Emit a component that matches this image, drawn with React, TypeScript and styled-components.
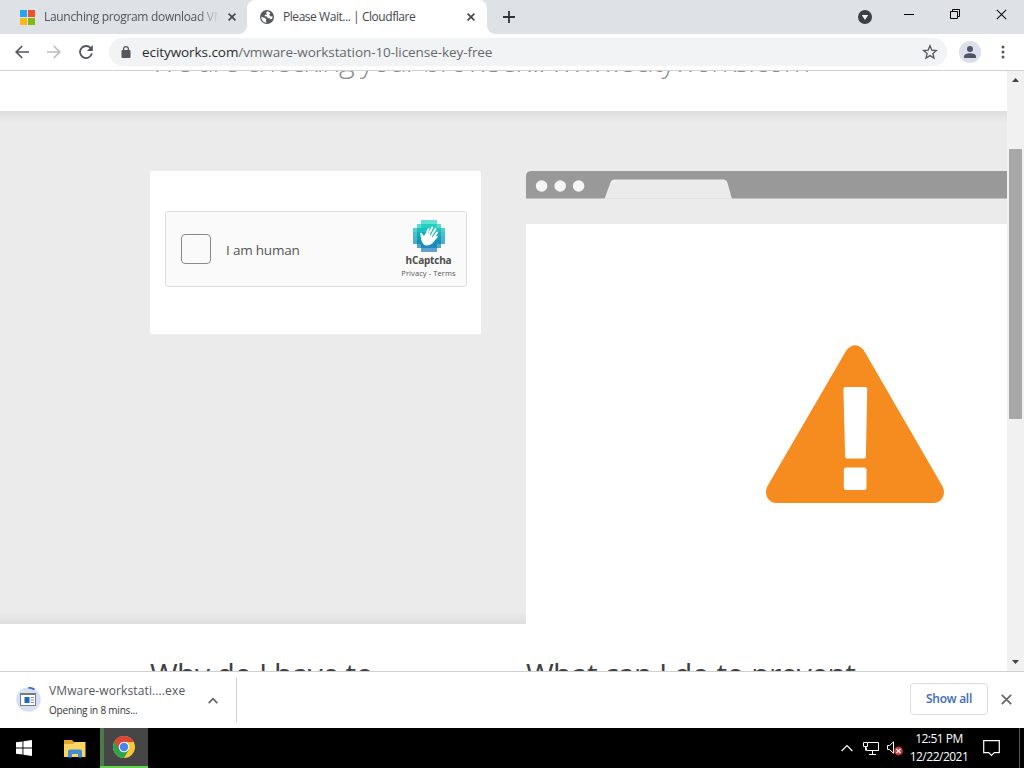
import styled, { createGlobalStyle } from "styled-components";

const GlobalStyle = createGlobalStyle`
  * {
    box-sizing: border-box;
  }
  body {
    margin: 0;
    overflow: hidden;
    font-family: "Open Sans", "Noto Sans", sans-serif;
  }
`;

const captchaRows = [
  [2, 5],
  [1, 6],
  [0, 7],
  [0, 7],
  [0, 7],
  [0, 7],
  [1, 6],
  [2, 5],
];

const captchaColors = [
  "#2fd8c4",
  "#25cfc2",
  "#1cc0bf",
  "#12aebb",
  "#109fb8",
  "#1592ba",
  "#2088bd",
  "#2b83c0",
];

const CaptchaLogo = () => (
  <svg width="32" height="32" viewBox="0 0 32 32">
    {captchaRows.map(([start, end], row) =>
      Array.from({ length: end - start + 1 }, (_, i) => {
        const col = start + i;
        const edge = Math.min(col, 7 - col, row, 7 - row);
        const corner =
          edge === 0 || (edge === 1 && (row < 2 || row > 5) && (i === 0 || i === end - start));
        return (
          <rect
            key={`${row}-${col}`}
            x={col * 4}
            y={row * 4}
            width="4"
            height="4"
            fill={captchaColors[row]}
            opacity={corner ? 0.75 : 1}
            shapeRendering="crispEdges"
          />
        );
      })
    )}
    <g stroke="#fff" strokeLinecap="round" strokeLinejoin="round" fill="#fff">
      <path
        d="M8 13.5 10.6 17 14 14.2 21 19.4C19.8 22.4 17.6 24.2 15 24.6 11.6 25 9.6 22.5 9 19.5z"
        strokeWidth="1.5"
      />
      <path
        d="M12.6 16 15.5 9.2M14.8 16.2 19.2 7.6M17 17.8 22.5 9M19 19.6 24 12.6M19.8 21 23.8 16.8"
        strokeWidth="2"
      />
    </g>
  </svg>
);

const WarningSign = () => (
  <svg width="178" height="158" viewBox="0 0 178 158">
    <path
      d="M80.4 5.2Q89.2-4.8 97.8 5.2L176 140.5C181.3 149.5 175 158 168 158H10C2.6 158-3.1 149.5 1.8 140.5z"
      fill="#f68b1f"
    />
    <path
      d="M79.4 42h19.8q2 0 2 2l-1.3 67.5q0 2-2 2H81.1q-2 0-2-2L77.4 44q0-2 2-2z"
      fill="#fff"
    />
    <rect x="77.8" y="122.5" width="22.7" height="22.4" rx="2.5" fill="#fff" />
  </svg>
);

const BrowserBar = () => (
  <svg width="481" height="28" viewBox="0 0 481 28">
    <path d="M0 27.5V5Q0 0 6 0H481V27.5z" fill="#999" />
    <path d="M78.5 28 84.6 11Q85.5 8.4 88 8.4H197.8Q200.3 8.4 201.2 11L206 28z" fill="#ebebeb" />
    <path d="M78.5 27.5H206" stroke="#e2e2e2" strokeWidth="1" />
    <circle cx="15.6" cy="15" r="5.8" fill="#f5f5f5" />
    <circle cx="34.2" cy="15" r="5.8" fill="#f5f5f5" />
    <circle cx="52.6" cy="15" r="5.8" fill="#f5f5f5" />
  </svg>
);

const CloseIcon = ({ size = 8, color = "#45484c", width = 1.7 }) => (
  <svg width={size} height={size} viewBox="0 0 8 8">
    <path d="M.6.6 7.4 7.4M7.4.6.6 7.4" stroke={color} strokeWidth={width} />
  </svg>
);

const App = () => {
  return (
    <Screen>
      <GlobalStyle />
      <TabStrip>
        <Tab>
          <svg width="15" height="15" viewBox="0 0 15 15">
            <path d="M0 0h7v7H0z" fill="#25a3ec" />
            <path d="M8 0h7v7H8z" fill="#f0512a" />
            <path d="M0 8h7v7H0z" fill="#fdb813" />
            <path d="M8 8h7v7H8z" fill="#7fba17" />
          </svg>
          <TabTitle $width={175} $spacing={-0.31} $faded>
            Launching program download VMware
          </TabTitle>
          <TabClose>
            <CloseIcon />
          </TabClose>
        </Tab>
        <Tab $active>
          <svg width="14" height="14" viewBox="0 0 14 14">
            <circle cx="7" cy="7" r="7" fill="#55585d" />
            <path
              d="M7.3 1.3 6 2.9 7.2 4.7H5.1L4.5 6.2 6.8 6.5 8.1 8.2H9.9L10.6 9.5 12.3 8.6 12.7 6.6 10.5 6.2 9.1 4.8 10.3 3.4 9.1 1.7zM1.3 6.7 5 8.1 6.5 9.4 5.8 10.5 6.6 12.7C3.6 12.6 1.2 10 1.3 6.7z"
              fill="#fff"
            />
          </svg>
          <TabTitle $width={178} $spacing={-0.45}>
            Please Wait... | Cloudflare
          </TabTitle>
          <TabClose>
            <CloseIcon />
          </TabClose>
        </Tab>
        <NewTab>
          <svg width="12" height="12" viewBox="0 0 12 12">
            <path d="M6 0v12M0 6h12" stroke="#303338" strokeWidth="1.8" />
          </svg>
        </NewTab>
        <WindowControls>
          <svg width="14" height="14" viewBox="0 0 14 14">
            <circle cx="7" cy="7" r="7" fill="#3c4043" />
            <path d="M3.8 5h6.4L7 10z" fill="#f1f3f4" />
          </svg>
          <svg width="10" height="10" viewBox="0 0 10 10">
            <path d="M0 5.5h10" stroke="#000" />
          </svg>
          <svg width="10" height="10" viewBox="0 0 10 10">
            <path d="M.5 2.5h7v7h-7zM2.5 2.5v-2h7v7h-2" fill="none" stroke="#000" />
          </svg>
          <CloseIcon size={11} color="#111" width={0.8} />
        </WindowControls>
      </TabStrip>

      <Toolbar>
        <NavIcons>
          <svg width="14" height="14" viewBox="0 0 14 14">
            <path d="M14 7H1.5M7.2 1 1.2 7l6 6" fill="none" stroke="#505358" strokeWidth="1.7" />
          </svg>
          <svg width="14" height="14" viewBox="0 0 14 14">
            <path d="M0 7h12.5M6.8 1l6 6-6 6" fill="none" stroke="#babcbe" strokeWidth="1.7" />
          </svg>
          <svg width="14" height="14" viewBox="0 0 14 14">
            <path d="M12 3.6A6 6 0 1 0 12.9 8.4" fill="none" stroke="#505358" strokeWidth="1.8" />
            <path d="M13.8 0v6H7.9z" fill="#505358" />
          </svg>
        </NavIcons>
        <AddressBar>
          <svg width="10" height="12" viewBox="0 0 10 12">
            <rect x=".5" y="4" width="9" height="8" rx="1" fill="#55585d" />
            <path d="M2.6 5V3a2.4 2.4 0 0 1 4.8 0v2" fill="none" stroke="#55585d" strokeWidth="1.3" />
          </svg>
          <Url>
            ecityworks.com<span>/vmware-workstation-10-license-key-free</span>
          </Url>
          <svg width="16" height="16" viewBox="0 0 16 16">
            <path
              d="m8 1.8 1.8 4.3 4.6.4-3.5 3 1.1 4.6L8 11.6l-4 2.5 1.1-4.6-3.5-3 4.6-.4z"
              fill="none"
              stroke="#55585d"
              strokeWidth="1.3"
            />
          </svg>
        </AddressBar>
        <Avatar>
          <svg width="12" height="12" viewBox="0 0 12 12">
            <circle cx="6" cy="3" r="3" fill="#4d5566" />
            <path d="M0 12v-1.5C0 8.3 3 7.3 6 7.3s6 1 6 3.2V12z" fill="#4d5566" />
          </svg>
        </Avatar>
        <svg width="4" height="14" viewBox="0 0 4 14">
          <circle cx="2" cy="2" r="1.5" fill="#55585d" />
          <circle cx="2" cy="7" r="1.5" fill="#55585d" />
          <circle cx="2" cy="12" r="1.5" fill="#55585d" />
        </svg>
      </Toolbar>

      <Viewport>
        <Page>
          <PageHeader>
            <Subheadline>We are checking your browser... www.ecityworks.com</Subheadline>
          </PageHeader>
          <Challenge>
            <CaptchaCard>
              <CaptchaWidget>
                <Checkbox />
                <CaptchaLabel>I am human</CaptchaLabel>
                <CaptchaBrand>
                  <CaptchaLogo />
                  <BrandName>hCaptcha</BrandName>
                  <BrandLinks>Privacy - Terms</BrandLinks>
                </CaptchaBrand>
              </CaptchaWidget>
            </CaptchaCard>
            <FakeBrowser>
              <BrowserBar />
              <FakePage>
                <WarningSign />
              </FakePage>
            </FakeBrowser>
          </Challenge>
          <Questions>
            <Question>Why do I have to</Question>
            <Question>What can I do to prevent</Question>
          </Questions>
        </Page>
        <Scrollbar>
          <svg width="7" height="4" viewBox="0 0 7 4">
            <path d="M0 4 3.5 0 7 4z" fill="#444" />
          </svg>
          <Thumb />
          <svg width="7" height="4" viewBox="0 0 7 4">
            <path d="M0 0 3.5 4 7 0z" fill="#444" />
          </svg>
        </Scrollbar>
      </Viewport>

      <Shelf>
        <Download>
          <svg width="26" height="28" viewBox="0 0 26 28">
            <circle cx="12.5" cy="13.5" r="12.2" fill="#d6e0f5" />
            <path d="M12.5 1.8a12 12 0 0 1 6 1.6" fill="none" stroke="#3f6fd0" strokeWidth="2" />
            <rect x="4.5" y="7.5" width="15" height="12" fill="#fff" stroke="#77797c" />
            <path d="M4 8h16" stroke="#77797c" strokeWidth="2" />
            <path d="M8.5 11h5v6h-5z" fill="#1769bd" />
            <path d="M14.5 11.5H18M14.5 14H18M14.5 16.5H18" stroke="#8f9599" />
          </svg>
          <div>
            <FileName>VMware-workstati....exe</FileName>
            <FileStatus>Opening in 8 mins...</FileStatus>
          </div>
          <svg width="10" height="7" viewBox="0 0 10 7">
            <path d="m.7 6.2 4.3-4.5 4.3 4.5" fill="none" stroke="#606367" strokeWidth="1.7" />
          </svg>
        </Download>
        <ShelfActions>
          <ShowAll>Show all</ShowAll>
          <CloseIcon size={11} color="#65686c" width={1.3} />
        </ShelfActions>
      </Shelf>

      <Taskbar>
        <TaskButton>
          <svg width="16" height="16" viewBox="0 0 16 16">
            <path d="M0 2.3 6.5 1.4V7.5H0zM7.4 1.3 16 0v7.5H7.4zM0 8.5h6.5v6.1L0 13.7zM7.4 8.5H16V16l-8.6-1.2z" fill="#fff" />
          </svg>
        </TaskButton>
        <TaskButton $wide>
          <svg width="22" height="19" viewBox="0 0 22 19">
            <path d="M0 1h8l2 2h11v15H0z" fill="#e6a52b" />
            <path d="M0 5h9l2-2h10.5v15H0z" fill="#fcd462" />
            <path d="M4 18.5V12.5q0-2 2-2h10q2 0 2 2v6h-4V15H8v3.5z" fill="#408ecf" />
          </svg>
        </TaskButton>
        <TaskButton $running>
          <svg width="22" height="22" viewBox="0 0 22 22">
            <circle cx="11" cy="11" r="11" fill="#fbc934" />
            <path d="M11 11 1.5 5.5A11 11 0 0 0 11 22L15.8 13.7z" fill="#2da350" />
            <path d="M11 11V6h9.8A11 11 0 0 0 1.5 5.5L6.3 13.8z" fill="#dc4537" />
            <circle cx="11" cy="11" r="5.3" fill="#f4f6f7" />
            <circle cx="11" cy="11" r="4.2" fill="#4285f4" />
          </svg>
        </TaskButton>
        <Tray>
          <svg width="12" height="8" viewBox="0 0 12 8">
            <path d="m.6 7 5.4-5.4L11.4 7" fill="none" stroke="#fff" strokeWidth="1.2" />
          </svg>
          <svg width="17" height="14" viewBox="0 0 17 14">
            <path d="M5 1.5h10.5v8H3.5v-3M9.500 10v3M6 13.5h7M.5 1.5h4v4h-4zM2.5 5.5v4" fill="none" stroke="#fff" />
          </svg>
          <svg width="16" height="15" viewBox="0 0 16 15">
            <path d="M.5 4.5h2L6.5.8v11.5l-4-3.8h-2z" fill="none" stroke="#fff" />
            <circle cx="11.5" cy="10" r="4.4" fill="#d13438" />
            <path d="m9.5 8 4 4m0-4-4 4" stroke="#fff" strokeWidth="1.2" />
          </svg>
          <Clock>
            <span>12:51 PM</span>
            <span>12/22/2021</span>
          </Clock>
          <svg width="17" height="17" viewBox="0 0 17 17">
            <path d="M.7.7h15.6v12h-5L8.5 15.5l-2.8-2.8h-5z" fill="none" stroke="#fff" strokeWidth="1.2" />
          </svg>
          <DesktopEdge />
        </Tray>
      </Taskbar>
    </Screen>
  );
};

export default App;

const Screen = styled.div`
  width: 1024px;
  height: 768px;
  display: flex;
  flex-direction: column;
  overflow: hidden;
  background: #fff;

  svg {
    display: block;
    flex: none;
  }
`;

const TabStrip = styled.div`
  height: 34px;
  flex: none;
  display: flex;
  background: #dee1e6;
`;

const Tab = styled.div<{ $active?: boolean }>`
  position: relative;
  width: ${(p) => (p.$active ? 240 : 247)}px;
  padding-left: ${(p) => (p.$active ? 13 : 20)}px;
  padding-right: ${(p) => (p.$active ? 8 : 7)}px;
  display: flex;
  align-items: center;
  background: ${(p) => (p.$active ? "#fff" : "transparent")};
  border-radius: 8px 8px 0 0;
  color: ${(p) => (p.$active ? "#45484c" : "#505459")};

  &::before,
  &::after {
    content: "";
    display: ${(p) => (p.$active ? "block" : "none")};
    position: absolute;
    bottom: 0;
    width: 8px;
    height: 8px;
  }
  &::before {
    left: -8px;
    background: radial-gradient(circle at 0 0, transparent 7.5px, #fff 8px);
  }
  &::after {
    right: -8px;
    background: radial-gradient(circle at 100% 0, transparent 7.5px, #fff 8px);
  }
`;

const TabTitle = styled.span<{ $width: number; $spacing: number; $faded?: boolean }>`
  width: ${(p) => p.$width}px;
  margin-left: 9px;
  overflow: hidden;
  white-space: nowrap;
  font-size: 12px;
  line-height: 18px;
  letter-spacing: ${(p) => p.$spacing}px;
  ${(p) => p.$faded && "mask-image: linear-gradient(to right, #000 88%, transparent);"}
`;

const TabClose = styled.div`
  width: 16px;
  margin-left: auto;
  display: flex;
  justify-content: center;
`;

const NewTab = styled.div`
  width: 44px;
  display: flex;
  align-items: center;
  justify-content: center;
`;

const WindowControls = styled.div`
  flex: 1;
  display: flex;
  align-items: flex-start;
  padding: 9px 17px 0 0;
  justify-content: flex-end;
  gap: 36px;

  svg:first-child {
    margin-top: 1px;
    margin-right: -4px;
  }
`;

const Toolbar = styled.div`
  height: 37px;
  flex: none;
  display: flex;
  align-items: center;
  padding: 0 19px 0 15px;
  border-bottom: 1px solid #cfd0d2;
  background: #fff;
`;

const NavIcons = styled.div`
  width: 94px;
  display: flex;
  gap: 18px;
`;

const AddressBar = styled.div`
  width: 838px;
  height: 28px;
  padding: 0 9px 0 12px;
  display: flex;
  align-items: center;
  border-radius: 14px;
  background: #f1f3f4;
`;

const Url = styled.div`
  flex: 1;
  margin-left: 11px;
  font-size: 13.5px;
  letter-spacing: -0.07px;
  color: #2a2c2f;

  span {
    color: #66696d;
  }
`;

const Avatar = styled.div`
  width: 22px;
  height: 22px;
  margin: 0 20px 0 12px;
  display: flex;
  align-items: center;
  justify-content: center;
  border-radius: 50%;
  background: #dce0ea;
`;

const Viewport = styled.div`
  height: 600px;
  flex: none;
  display: flex;
  overflow: hidden;
`;

const Page = styled.div`
  width: 1007px;
  height: 600px;
  overflow: hidden;
  display: flex;
  flex-direction: column;
`;

const PageHeader = styled.div`
  height: 40px;
  flex: none;
  padding-left: 150px;
  display: flex;
  align-items: flex-end;
  overflow: hidden;
`;

const Subheadline = styled.h2`
  margin: 0 0 30px;
  font-size: 30px;
  font-weight: 300;
  line-height: 40px;
  letter-spacing: -1.12px;
  white-space: nowrap;
  color: #8c8c8c;
`;

const Challenge = styled.div`
  height: 513px;
  flex: none;
  padding: 60px 0 0 150px;
  display: flex;
  align-items: flex-start;
  gap: 45px;
  background:
    linear-gradient(to bottom, #dedede, #ebebeb00) top / 100% 12px no-repeat,
    linear-gradient(to top, #dedede, #ebebeb00) bottom / 100% 12px no-repeat,
    #ebebeb;
`;

const CaptchaCard = styled.div`
  width: 331px;
  height: 163px;
  padding: 40px 14px 0 15px;
  background: #fff;
  border-radius: 2px;
`;

const CaptchaWidget = styled.div`
  width: 302px;
  height: 76px;
  padding-left: 15px;
  display: flex;
  align-items: center;
  background: #fafafa;
  border: 1px solid #dedede;
  border-radius: 3px;
`;

const Checkbox = styled.div`
  width: 30px;
  height: 30px;
  background: #fafafa;
  border: 1px solid #8a8a8a;
  border-radius: 4px;
`;

const CaptchaLabel = styled.span`
  flex: 1;
  margin: 2px 0 0 15px;
  font-size: 13.5px;
  letter-spacing: -0.2px;
  color: #555;
`;

const CaptchaBrand = styled.div`
  width: 75px;
  height: 74px;
  padding-top: 8px;
  display: flex;
  flex-direction: column;
  align-items: center;
`;

const BrandName = styled.span`
  margin-top: 1px;
  font-size: 10px;
  font-weight: 700;
  line-height: 14px;
  letter-spacing: -0.2px;
  color: #4d4d4d;
`;

const BrandLinks = styled.span`
  font-size: 7.5px;
  line-height: 12px;
  letter-spacing: 0.1px;
  color: #555;
`;

const FakeBrowser = styled.div`
  width: 481px;
  height: 453px;
  display: flex;
  flex-direction: column;
  gap: 25px;
`;

const FakePage = styled.div`
  flex: 1;
  padding: 121px 0 0 240px;
  background: #fff;
`;

const Questions = styled.div`
  height: 47px;
  padding: 30px 0 0 150px;
  display: flex;
  gap: 45px;
  overflow: hidden;
`;

const Question = styled.h2`
  width: 331px;
  margin: 0;
  font-size: 30px;
  font-weight: 400;
  line-height: 39px;
  letter-spacing: -0.6px;
  white-space: nowrap;
  color: #404040;
`;

const Scrollbar = styled.div`
  width: 17px;
  height: 600px;
  padding: 7px 0 7px;
  display: flex;
  flex-direction: column;
  align-items: center;
  background: #f1f1f1;

  svg:last-child {
    margin-top: auto;
  }
`;

const Thumb = styled.div`
  width: 13px;
  height: 270px;
  margin-top: 67px;
  background: #a8a8a8;
`;

const Shelf = styled.div`
  height: 57px;
  flex: none;
  display: flex;
  justify-content: space-between;
  align-items: center;
  border-top: 1px solid #cfd0d2;
  background: #fff;
`;

const Download = styled.div`
  width: 237px;
  height: 45px;
  padding: 0 18px 0 16px;
  display: flex;
  align-items: center;
  border-right: 1px solid #cfd0d2;

  > div {
    flex: 1;
    margin-left: 7px;
  }
`;

const FileName = styled.div`
  font-size: 12px;
  line-height: 20px;
  letter-spacing: 0.12px;
  color: #55585d;
`;

const FileStatus = styled.div`
  font-size: 10px;
  line-height: 18px;
  letter-spacing: -0.2px;
  color: #333;
`;

const ShelfActions = styled.div`
  display: flex;
  align-items: center;
  gap: 13px;
  padding: 0 12px 2px 0;
`;

const ShowAll = styled.button`
  width: 78px;
  height: 32px;
  padding: 0 0 1px;
  border: 1px solid #dadce0;
  border-radius: 4px;
  background: #fff;
  color: #3d69b8;
  font: 600 12px "Open Sans", sans-serif;
  letter-spacing: -0.25px;
`;

const Taskbar = styled.div`
  height: 40px;
  flex: none;
  display: flex;
  background: #000;
  color: #fff;
`;

const TaskButton = styled.div<{ $running?: boolean; $wide?: boolean }>`
  width: ${(p) => (p.$wide ? 52 : 48)}px;
  padding-left: ${(p) => (p.$wide ? 2 : 0)}px;
  display: flex;
  align-items: center;
  justify-content: center;
  background: ${(p) => (p.$running ? "#464646" : "transparent")};
  border-bottom: ${(p) => (p.$running ? "2px solid #5fd34c" : "none")};
  box-shadow: ${(p) => (p.$running ? "inset 4px 0 #4c7a49" : "none")};
`;

const Tray = styled.div`
  margin-left: auto;
  display: flex;
  align-items: center;

  svg:nth-child(2) {
    margin-left: 10px;
  }
  svg:nth-child(3) {
    margin-left: 7px;
  }
`;

const Clock = styled.div`
  width: 72px;
  margin-right: 8px;
  display: flex;
  flex-direction: column;
  align-items: center;
  font-size: 12px;
  line-height: 18px;
  letter-spacing: -0.5px;
`;

const DesktopEdge = styled.div`
  width: 5px;
  height: 40px;
  margin-left: 19px;
  border-left: 1px solid #555;
`;
